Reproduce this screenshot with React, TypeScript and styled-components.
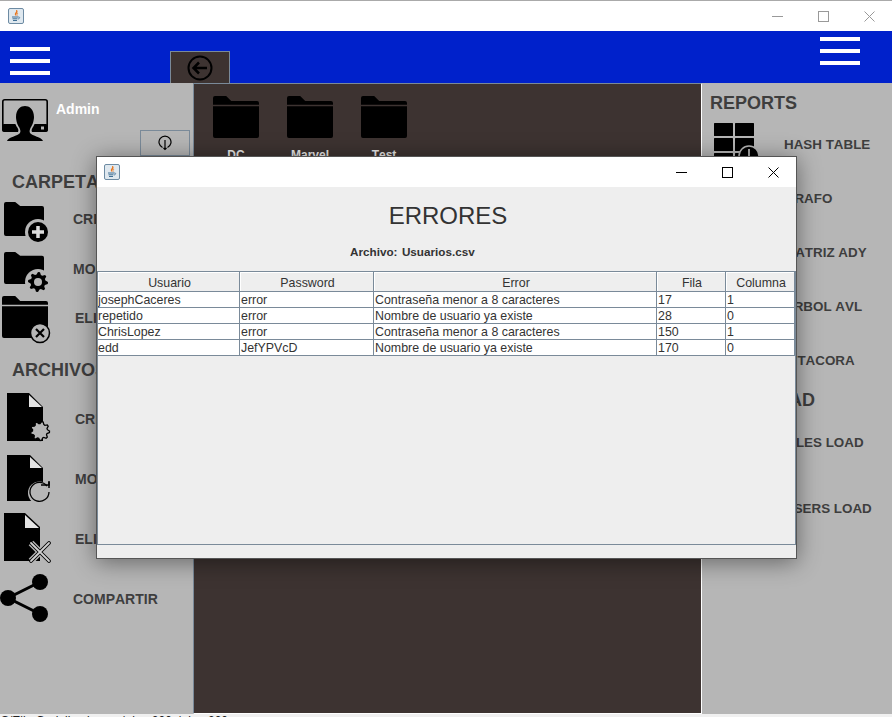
import React from "react";
import styled, { createGlobalStyle } from "styled-components";

const PANEL = "#b6b6b6";
const DARK = "#3d3331";
const LINE = "#7a8a99";

const Global = createGlobalStyle`
  html, body { margin: 0; padding: 0; background: #fff; }
  * { box-sizing: border-box; }
`;

const Screen = styled.div`
  position: relative;
  width: 892px;
  height: 717px;
  overflow: hidden;
  display: flex;
  flex-direction: column;
  font-family: "Liberation Sans", Arial, sans-serif;
  font-kerning: none;
  border-top: 1px solid #aaa;
  background: #f0f0f0;
`;

const TitleBar = styled.div<{ $h: number; $iconLeft: number }>`
  height: ${(p) => p.$h}px;
  flex: none;
  background: #fff;
  display: flex;
  align-items: center;
  padding-left: ${(p) => p.$iconLeft}px;
`;

const Controls = styled.div`
  margin-left: auto;
  height: 100%;
  display: flex;
`;

const ControlBtn = styled.div`
  width: 46px;
  height: 100%;
  display: flex;
  align-items: center;
  justify-content: center;
`;

const BlueBar = styled.div`
  height: 52px;
  flex: none;
  background: #0021cb;
  display: flex;
  align-items: flex-start;
`;

const Burger = styled.svg<{ $top: number; $left: number; $right: number }>`
  flex: none;
  width: 40px;
  height: 28px;
  margin-top: ${(p) => p.$top}px;
  margin-left: ${(p) => p.$left}px;
  margin-right: ${(p) => p.$right}px;
`;

const BackButton = styled.div`
  width: 60px;
  height: 32px;
  margin-top: 20px;
  margin-left: 120px;
  margin-right: auto;
  background: ${DARK};
  border: 1px solid ${LINE};
  border-bottom: none;
  display: flex;
  align-items: center;
  justify-content: center;
`;

const Body = styled.div`
  flex: 1;
  min-height: 0;
  display: flex;
`;

const LeftPanel = styled.div`
  width: 193px;
  flex: none;
  background: ${PANEL};
  display: flex;
  flex-direction: column;
`;

const RightPanel = styled.div`
  flex: 1;
  background: ${PANEL};
  display: flex;
  flex-direction: column;
`;

const UserBlock = styled.div`
  height: 87px;
  flex: none;
  display: flex;
  flex-direction: column;
  padding: 16px 3px 0 2px;
`;

const UserRow = styled.div`
  display: flex;
  align-items: flex-start;
  gap: 8px;
`;

const UserName = styled.span`
  color: #fff;
  font-size: 14px;
  font-weight: 700;
  line-height: 16px;
  margin-top: 2px;
`;

const InfoButton = styled.div`
  align-self: flex-end;
  width: 50px;
  height: 26px;
  margin-top: -11px;
  border: 1px solid ${LINE};
  display: flex;
  align-items: center;
  justify-content: center;
`;

const Heading = styled.div<{ $h: number; $left: number; $top?: number }>`
  height: ${(p) => p.$h}px;
  margin-top: ${(p) => p.$top ?? 0}px;
  flex: none;
  display: flex;
  align-items: center;
  padding-left: ${(p) => p.$left}px;
  color: #3e3e3e;
  font-size: 18px;
  font-weight: 700;
  white-space: nowrap;
`;

const ItemRow = styled.div<{ $h: number }>`
  position: relative;
  height: ${(p) => p.$h}px;
  flex: none;
  display: flex;
  align-items: center;
`;

const ItemIcon = styled.svg<{ $w: number }>`
  width: ${(p) => p.$w}px;
  height: 100%;
  flex: none;
  overflow: visible;
`;

const ItemLabel = styled.span<{ $left: number; $size: number }>`
  padding-left: ${(p) => p.$left}px;
  color: #3e3e3e;
  font-size: ${(p) => p.$size}px;
  font-weight: 700;
  white-space: nowrap;
`;

const CenterPanel = styled.div`
  width: 509px;
  flex: none;
  background: ${DARK};
  border: 1px solid #fff;
  border-top-color: ${LINE};
  border-left-color: ${LINE};
  display: flex;
  align-items: flex-start;
  padding: 12px 0 0 5px;
`;

const FolderTile = styled.div`
  width: 74px;
  display: flex;
  flex-direction: column;
  align-items: center;
`;

const FolderSvg = styled.svg`
  width: 46px;
  height: 42px;
`;

const FolderName = styled.span`
  margin-top: 9px;
  color: #e8e8e8;
  font-size: 12px;
  font-weight: 700;
  line-height: 16px;
`;

const BottomStrip = styled.div`
  height: 3px;
  flex: none;
  overflow: hidden;
  background: #f0f0f0;
  color: #222;
  font-size: 12px;
  line-height: 12px;
  white-space: pre;
  padding-left: 1px;
  display: flex;
`;

const StripText = styled.div<{ $left: number }>`
  margin-top: 1px;
  margin-left: ${(p) => p.$left}px;
`;

const Dialog = styled.div`
  position: absolute;
  left: 96px;
  top: 155px;
  width: 701px;
  height: 403px;
  background: #eee;
  border: 1px solid #555;
  box-shadow: 0 3px 22px rgba(0, 0, 0, 0.45);
  display: flex;
  flex-direction: column;
`;

const DialogTitle = styled.div`
  height: 58px;
  flex: none;
  display: flex;
  align-items: center;
  justify-content: center;
  padding-left: 3px;
  color: #333;
  font-size: 24px;
`;

const FileLabel = styled.div`
  height: 14px;
  flex: none;
  margin-bottom: 12px;
  padding-left: 253px;
  color: #333;
  font-size: 11.7px;
  font-weight: 700;
  line-height: 14px;
  word-spacing: -1px;
  white-space: pre;
`;

const TablePane = styled.div`
  height: 274px;
  flex: none;
  width: 699px;
  background: #eee;
  border: 1px solid ${LINE};
`;

const Table = styled.table`
  width: 697px;
  table-layout: fixed;
  border-collapse: separate;
  border-spacing: 0;
  font-size: 12.4px;
  color: #333;
`;

const HeadCell = styled.th<{ $w: number }>`
  width: ${(p) => p.$w}px;
  height: 20px;
  padding: 2px 0 0 2px;
  font-weight: 400;
  text-align: center;
  background: #eee;
  border-right: 1px solid ${LINE};
  border-bottom: 1px solid ${LINE};
  box-shadow: inset 1px 1px 0 #fff;
`;

const Cell = styled.td`
  height: 16px;
  padding: 2px 0 0 1px;
  line-height: 13px;
  background: #fff;
  border-right: 1px solid ${LINE};
  border-bottom: 1px solid ${LINE};
  white-space: nowrap;
  overflow: hidden;
  &:first-child {
    padding-left: 0;
  }
`;

const JavaIcon = () => (
  <svg width="16" height="16" viewBox="0 0 16 16">
    <rect x="0.5" y="0.5" width="15" height="15" rx="1.5" fill="#dfe8ef" stroke="#6d8ba3" />
    <path d="M8 2c1 2-2 3-1 5 .4.8 1 1 1 1-1-2 3-3 1-6z" fill="#e8761e" />
    <path d="M10 5c-1 1-1.500 2-.7 3" stroke="#e8761e" strokeWidth="0.8" fill="none" />
    <path d="M4 9h6M4.500 10.800h5M5 12.500h4" stroke="#3f6f94" strokeWidth="1" />
    <path d="M10 9c2-.5 2.500 1.500 0 2" stroke="#3f6f94" strokeWidth="0.8" fill="none" />
  </svg>
);

const WinControls = ({ color }: { color: string }) => (
  <Controls>
    <ControlBtn>
      <svg width="11" height="11" viewBox="0 0 11 11"><path d="M0 5.500h11" stroke={color} /></svg>
    </ControlBtn>
    <ControlBtn>
      <svg width="11" height="11" viewBox="0 0 11 11"><rect x="0.500" y="0.500" width="10" height="10" fill="none" stroke={color} /></svg>
    </ControlBtn>
    <ControlBtn>
      <svg width="11" height="11" viewBox="0 0 11 11"><path d="M0.500 0.500l10 10M10.500 0.500l-10 10" stroke={color} /></svg>
    </ControlBtn>
  </Controls>
);

const BurgerIcon = ({ top, left, right }: { top: number; left: number; right: number }) => (
  <Burger $top={top} $left={left} $right={right} viewBox="0 0 40 28">
    <rect width="40" height="4" y="0" fill="#fff" />
    <rect width="40" height="4" y="12" fill="#fff" />
    <rect width="40" height="4" y="24" fill="#fff" />
  </Burger>
);

const gear = (cx: number, cy: number, r: number, R: number, n: number) => {
  const pts: string[] = [];
  for (let i = 0; i < n * 4; i++) {
    const a = (i / (n * 4)) * Math.PI * 2;
    const rad = i % 4 < 2 ? R : r;
    pts.push(`${(cx + rad * Math.cos(a)).toFixed(1)},${(cy + rad * Math.sin(a)).toFixed(1)}`);
  }
  return pts.join(" ");
};

const folderD = (x: number, y: number, w: number, h: number, split: boolean) => {
  const tab = w * 0.33;
  const top = y + h * 0.12;
  const gapY = y + h * 0.21;
  if (!split) {
    return `M${x + 2} ${y}H${x + tab - 2}L${x + tab + 3} ${top}H${x + w - 2}Q${x + w} ${top} ${x + w} ${top + 2}V${y + h - 2}Q${x + w} ${y + h} ${x + w - 2} ${y + h}H${x + 2}Q${x} ${y + h} ${x} ${y + h - 2}V${y + 2}Q${x} ${y} ${x + 2} ${y}Z`;
  }
  return `M${x} ${gapY}V${y + 2}Q${x} ${y} ${x + 2} ${y}H${x + tab - 2}L${x + tab + 3} ${top}H${x + w - 2}Q${x + w} ${top} ${x + w} ${top + 2}V${gapY}Z` +
    `M${x} ${gapY + 1.500}H${x + w}V${y + h - 2}Q${x + w} ${y + h} ${x + w - 2} ${y + h}H${x + 2}Q${x} ${y + h} ${x} ${y + h - 2}Z`;
};

const UserIcon = () => (
  <svg width="46" height="42" viewBox="0 0 46 42">
    <rect x="0.800" y="0.800" width="44.400" height="31" rx="2" fill="none" stroke="#000" strokeWidth="1.600" />
    <rect x="0" y="25" width="46" height="8" rx="2" fill="#000" />
    <rect x="39" y="27.500" width="3" height="3" fill={PANEL} />
    <path d="M3 42c1-6 11-6 13-9 1-2 0-3-1-5-1-1-3-6-3-10 0-9 6-13 11-13s11 4 11 13c0 4-2 9-3 10-1 2-2 3-1 5 2 3 12 3 13 9z" fill={PANEL} />
    <path d="M5 42c1-4 11-5 13-8 1-2 0-4-1-6-1-1-3-6-3-10 0-8 5-11 9-11s9 3 9 11c0 4-2 9-3 10-1 2-2 4-1 6 2 3 12 4 13 8z" fill="#000" />
  </svg>
);

const Grid = () => (
  <>
    {[123, 138, 153].flatMap((y) =>
      [714, 735].map((x) => <rect key={`${x}-${y}`} x={x} y={y} width="19" height="13" rx="0.500" fill="#000" />)
    )}
    <circle cx="749" cy="156" r="10" fill="#000" stroke={PANEL} strokeWidth="1.500" />
    <path d="M749 149v7" stroke="#ddd" strokeWidth="1.500" />
  </>
);

const leftItems: { label: string; h: number; vb: string; left: number; icon: React.ReactNode }[] = [
  {
    label: "CREAR", h: 50, vb: "0 194 60 50", left: 13,
    icon: (
      <>
        <path d={folderD(4, 202, 40, 34, false)} fill="#000" />
        <circle cx="38" cy="232" r="13" fill={PANEL} />
        <circle cx="38" cy="232" r="10" fill="#000" />
        <path d="M38 226v12M32 232h12" stroke="#ddd" strokeWidth="3.500" />
      </>
    ),
  },
  {
    label: "MODIFICAR", h: 50, vb: "0 244 60 50", left: 13,
    icon: (
      <>
        <path d={folderD(4, 252, 40, 32, false)} fill="#000" />
        <circle cx="38" cy="282" r="13" fill={PANEL} />
        <polygon points={gear(38, 282, 7.500, 10, 8)} fill="#000" />
        <circle cx="38" cy="282" r="4" fill={PANEL} />
      </>
    ),
  },
  {
    label: "ELIMINAR", h: 48, vb: "0 294 60 48", left: 15,
    icon: (
      <>
        <path d={folderD(2, 296, 46, 42, true)} fill="#000" />
        <circle cx="40" cy="333" r="9.500" fill={PANEL} stroke="#000" strokeWidth="1.500" />
        <path d="M36 329l8 8M44 329l-8 8" stroke="#000" strokeWidth="2.200" />
      </>
    ),
  },
];

const docItems: { label: string; h: number; vb: string; left: number; icon: React.ReactNode }[] = [
  {
    label: "CREAR", h: 42, vb: "0 398 60 42", left: 15,
    icon: (
      <>
        <path d="M7 393H29L43 407V441H7Z" fill="#000" />
        <path d="M29 395L42 407H29Z" fill="#e4e4e4" />
        <polygon points={gear(40, 431, 7.500, 9.500, 9)} fill={PANEL} stroke="#000" strokeWidth="1.300" />
      </>
    ),
  },
  {
    label: "MODIFICAR", h: 78, vb: "0 440 60 78", left: 15,
    icon: (
      <>
        <path d="M7 455H30L43 468V501H7Z" fill="#000" />
        <path d="M30 457L42 468H30Z" fill="#e4e4e4" />
        <circle cx="39.500" cy="493" r="11.500" fill={PANEL} />
        <path d="M47 486A9.500 9.500 0 1 0 49 492" fill="none" stroke="#000" strokeWidth="1.300" />
        <path d="M41 485h8v-3" fill="none" stroke="#000" strokeWidth="1.500" />
        <path d="M49 481v7" stroke="#000" strokeWidth="1.500" />
      </>
    ),
  },
  {
    label: "ELIMINAR", h: 42, vb: "0 518 60 42", left: 15,
    icon: (
      <>
        <path d="M4 513H25L40 527V561H4Z" fill="#000" />
        <path d="M25 515L39 528H25Z" fill="#e4e4e4" />
        <path d="M31 543l18 18M49 543l-18 18" stroke={PANEL} strokeWidth="6.500" />
        <path d="M31 543l18 18M49 543l-18 18" stroke="#000" strokeWidth="3.800" strokeLinecap="round" />
        <path d="M31 543l18 18M49 543l-18 18" stroke="#d0d0d0" strokeWidth="1.800" strokeLinecap="round" />
      </>
    ),
  },
  {
    label: "COMPARTIR", h: 78, vb: "0 560 60 78", left: 13,
    icon: (
      <>
        <path d="M40 582L8 598L40 614" fill="none" stroke="#000" strokeWidth="3" />
        <circle cx="40" cy="582" r="8" fill="#000" />
        <circle cx="8" cy="598" r="8" fill="#000" />
        <circle cx="40" cy="614" r="8" fill="#000" />
      </>
    ),
  },
];

const ItemList = ({ items }: { items: typeof leftItems }) => (
  <>
    {items.map((it) => (
      <ItemRow key={it.vb} $h={it.h}>
        <ItemIcon $w={60} viewBox={it.vb} preserveAspectRatio="xMinYMin">{it.icon}</ItemIcon>
        <ItemLabel $left={it.left} $size={14}>{it.label}</ItemLabel>
      </ItemRow>
    ))}
  </>
);

const reports: { label: string; h: number }[] = [
  { label: "GRAFO", h: 54 },
  { label: "MATRIZ ADY", h: 54 },
  { label: "ARBOL AVL", h: 54 },
  { label: "BITACORA", h: 54 },
];

const columns = [
  { name: "Usuario", w: 142 },
  { name: "Password", w: 134 },
  { name: "Error", w: 283 },
  { name: "Fila", w: 69 },
  { name: "Columna", w: 69 },
];

const rows = [
  ["josephCaceres", "error", "Contraseña menor a 8 caracteres", "17", "1"],
  ["repetido", "error", "Nombre de usuario ya existe", "28", "0"],
  ["ChrisLopez", "error", "Contraseña menor a 8 caracteres", "150", "1"],
  ["edd", "JefYPVcD", "Nombre de usuario ya existe", "170", "0"],
];

export default function App() {
  return (
    <Screen>
      <Global />
      <TitleBar $h={30} $iconLeft={8}>
        <JavaIcon />
        <WinControls color="#999" />
      </TitleBar>
      <BlueBar>
        <BurgerIcon top={16} left={10} right={0} />
        <BackButton>
          <svg width="26" height="26" viewBox="0 0 26 26">
            <circle cx="13" cy="13" r="11.500" fill="none" stroke="#000" strokeWidth="2" />
            <path d="M20 13H7M12 7.500L6.500 13L12 18.500" fill="none" stroke="#000" strokeWidth="2.500" />
          </svg>
        </BackButton>
        <BurgerIcon top={6} left={0} right={32} />
      </BlueBar>
      <Body>
        <LeftPanel>
          <UserBlock>
            <UserRow>
              <UserIcon />
              <UserName>Admin</UserName>
            </UserRow>
            <InfoButton>
              <svg width="14" height="16" viewBox="0 0 14 16">
                <path d="M4.500 12.500A6 6 0 1 1 9.500 12.500" fill="none" stroke="#000" strokeWidth="1.200" />
                <path d="M7 5v9.500M5.500 13L7 14.500L8.500 13" fill="none" stroke="#000" strokeWidth="1.200" />
              </svg>
            </InfoButton>
          </UserBlock>
          <Heading $h={24} $left={12}>CARPETAS</Heading>
          <ItemList items={leftItems} />
          <Heading $h={56} $left={12}>ARCHIVOS</Heading>
          <ItemList items={docItems} />
        </LeftPanel>
        <CenterPanel>
          {["DC", "Marvel", "Test"].map((name) => (
            <FolderTile key={name}>
              <FolderSvg viewBox="0 0 46 42">
                <path d={folderD(0, 0, 46, 42, true)} fill="#000" />
              </FolderSvg>
              <FolderName>{name}</FolderName>
            </FolderTile>
          ))}
        </CenterPanel>
        <RightPanel>
          <Heading $h={28} $left={8} $top={6}>REPORTS</Heading>
          <ItemRow $h={54}>
            <ItemIcon $w={82} viewBox="702 117 82 54" preserveAspectRatio="xMinYMin"><Grid /></ItemIcon>
            <ItemLabel $left={0} $size={13.4}>HASH TABLE</ItemLabel>
          </ItemRow>
          {reports.map((r) => (
            <ItemRow key={r.label} $h={r.h}>
              <ItemLabel $left={82} $size={13.4}>{r.label}</ItemLabel>
            </ItemRow>
          ))}
          <Heading $h={27} $left={5}>MASS LOAD</Heading>
          <ItemRow $h={56}>
            <ItemLabel $left={82} $size={13.4}>FILES LOAD</ItemLabel>
          </ItemRow>
          <ItemRow $h={76}>
            <ItemLabel $left={82} $size={13.4}>USERS LOAD</ItemLabel>
          </ItemRow>
        </RightPanel>
      </Body>
      <BottomStrip>
        <StripText $left={0}>S/ElimGadoliosdes</StripText>
        <StripText $left={20}>|  i  = 200  |  i  = 200</StripText>
      </BottomStrip>
      <Dialog>
        <TitleBar $h={30} $iconLeft={7}>
          <JavaIcon />
          <WinControls color="#000" />
        </TitleBar>
        <DialogTitle>ERRORES</DialogTitle>
        <FileLabel>Archivo:  Usuarios.csv</FileLabel>
        <TablePane>
          <Table>
            <thead>
              <tr>
                {columns.map((c) => (
                  <HeadCell key={c.name} $w={c.w}>{c.name}</HeadCell>
                ))}
              </tr>
            </thead>
            <tbody>
              {rows.map((r) => (
                <tr key={r[0]}>
                  {r.map((v, i) => (
                    <Cell key={i}>{v}</Cell>
                  ))}
                </tr>
              ))}
            </tbody>
          </Table>
        </TablePane>
      </Dialog>
    </Screen>
  );
}
